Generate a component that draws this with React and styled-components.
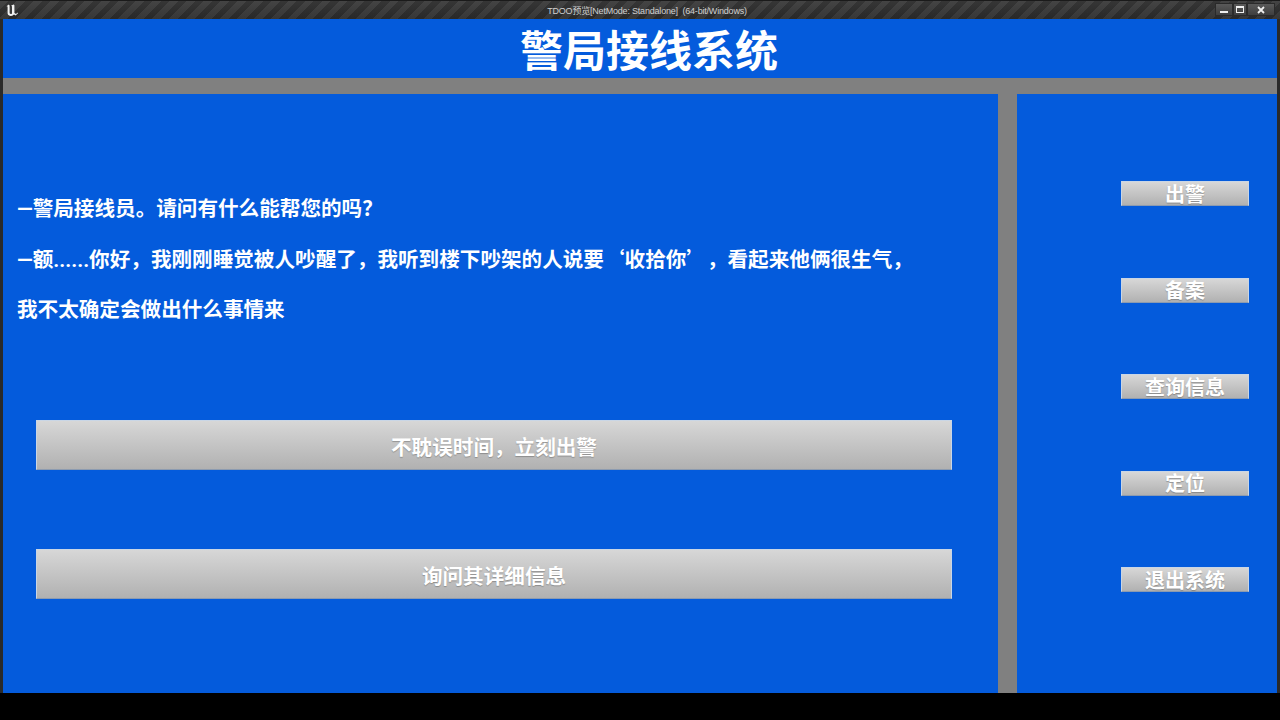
import styled, { createGlobalStyle } from "styled-components";

const GlobalStyle = createGlobalStyle`
  html, body {
    margin: 0;
    padding: 0;
    background: #000;
  }
  #root {
    width: 1280px;
    height: 720px;
    overflow: hidden;
  }
`;

const FONT = `Roboto, "Noto Sans CJK SC", sans-serif`;
const BLUE = "#045bdc";
const GRAY = "#808080";

// 대사 / 선택지 / 메뉴
const choices = ["不耽误时间，立刻出警", "询问其详细信息"];
const menu = ["出警", "备案", "查询信息", "定位", "退出系统"];

const UeLogo = () => (
  <svg width="14" height="14" viewBox="0 0 14 14">
    <path
      d="M1.5 3.2 L3.8 1.6 L4.6 2.4 L4.6 10.2 Q5.6 11.6 7 10.4 L7 3.4 L6.2 2.6 L8.6 1.4 L9.4 2.2 L9.4 10 L11 11 L12.6 9.6 L13 10.2 L10.6 12.6 L9 11.4 Q6.4 13.6 4.2 12.6 Q2.8 12 2.6 10.6 L2.6 3.6 Z"
      fill="#f2f2f2"
    />
  </svg>
);

const App = () => {
  return (
    <Window>
      <GlobalStyle />
      <TitleBar>
        <LogoBox><UeLogo /></LogoBox>
        <TitleText>TDOO预览[NetMode: Standalone]&nbsp;&nbsp;(64-bit/Windows)</TitleText>
        <WinButtons>
          <WinBtn $w={18}>
            <svg width="8" height="8" viewBox="0 0 8 8"><rect x="0" y="5" width="8" height="2" fill="#eee" /></svg>
          </WinBtn>
          <WinBtn $w={14}>
            <svg width="8" height="8" viewBox="0 0 8 8"><rect x="0.5" y="0.5" width="7" height="6" fill="none" stroke="#eee" /><rect x="0" y="0" width="8" height="2" fill="#eee" /></svg>
          </WinBtn>
          <WinBtn $w={28}>
            <svg width="8" height="8" viewBox="0 0 8 8"><path d="M1 1 L7 7 M7 1 L1 7" stroke="#eee" strokeWidth="1.8" /></svg>
          </WinBtn>
        </WinButtons>
      </TitleBar>
      <Frame>
        <Header>
          <Heading>警局接线系统</Heading>
        </Header>
        <Divider />
        <Body>
          <LeftPanel>
            <Dialog>
              <Line>—警局接线员。请问有什么能帮您的吗？</Line>
              <Line>
                —额......你好，我刚刚睡觉被人吵醒了，我听到楼下吵架的人说要<Quote $side="open">‘</Quote>收拾你<Quote $side="close">’</Quote>，看起来他俩很生气，
              </Line>
              <Line>我不太确定会做出什么事情来</Line>
            </Dialog>
            <Choices>
              {choices.map((c) => (
                <ChoiceButton key={c}>{c}</ChoiceButton>
              ))}
            </Choices>
          </LeftPanel>
          <Separator />
          <RightPanel>
            {menu.map((m) => (
              <MenuButton key={m}>{m}</MenuButton>
            ))}
          </RightPanel>
        </Body>
      </Frame>
      <BottomBar />
    </Window>
  );
};

export default App;

const Window = styled.div`
  width: 1280px;
  height: 720px;
  display: flex;
  flex-direction: column;
  background: #000;
  font-family: ${FONT};
`;

const TitleBar = styled.div`
  height: 19px;
  flex-shrink: 0;
  position: relative;
  display: flex;
  align-items: center;
  background:
    repeating-linear-gradient(135deg, rgba(255,255,255,0.05) 0 6px, rgba(0,0,0,0.08) 6px 12px),
    linear-gradient(#3a3a3a, #2c2c2c);
  border-top: 1px solid #1a1a1a;
  box-sizing: border-box;
`;

const LogoBox = styled.div`
  width: 20px;
  display: flex;
  justify-content: center;
  padding-left: 2px;
`;

const TitleText = styled.div`
  position: absolute;
  left: 0;
  right: 0;
  top: 3px;
  text-align: center;
  font-family: "Liberation Sans", "Noto Sans CJK SC", sans-serif;
  font-size: 9px;
  color: #d0d0d0;
  padding-left: 14px;
  letter-spacing: -0.2px;
`;

const WinButtons = styled.div`
  margin-left: auto;
  margin-right: 5px;
  display: flex;
  height: 13px;
  align-self: flex-start;
  margin-top: 2px;
`;

const WinBtn = styled.div`
  width: ${(p) => p.$w}px;
  height: 13px;
  display: flex;
  align-items: center;
  justify-content: center;
  background: linear-gradient(#5a5a5a, #3e3e3e);
  border: 1px solid #2a2a2a;
  box-sizing: border-box;
`;

const Frame = styled.div`
  height: 674px;
  flex-shrink: 0;
  display: flex;
  flex-direction: column;
  background: ${BLUE};
  border-left: 3px solid #2a2a2a;
  border-right: 3px solid #2a2a2a;
  box-sizing: border-box;
`;

const Header = styled.div`
  height: 59px;
  display: flex;
  align-items: center;
  justify-content: center;
`;

const Heading = styled.h1`
  margin: 0 0 0 18px;
  font-family: "Noto Sans CJK SC", sans-serif;
  font-size: 43px;
  font-weight: 700;
  color: #fff;
  line-height: 1;
`;

const Divider = styled.div`
  height: 16px;
  background: ${GRAY};
`;

const Body = styled.div`
  flex: 1;
  display: flex;
`;

const LeftPanel = styled.div`
  width: 995px;
  display: flex;
  flex-direction: column;
`;

const Dialog = styled.div`
  padding: 90px 0 0 14px;
`;

const Line = styled.div`
  font-size: 20.6px;
  font-weight: 700;
  line-height: 50.5px;
  height: 50.5px;
  color: #fff;
  white-space: nowrap;
`;

// 전각 따옴표: 한 글자 폭을 차지
const Quote = styled.span`
  display: inline-block;
  width: 1em;
  line-height: 1;
  font-family: "Noto Sans CJK SC", sans-serif;
  text-align: ${(p) => (p.$side === "open" ? "right" : "left")};
`;

const Choices = styled.div`
  margin-top: 84px;
  padding-left: 33px;
  display: flex;
  flex-direction: column;
  gap: 79px;
`;

const grayButton = `
  background: linear-gradient(#d7d7d7, #b1b1b1);
  border: 1px solid #c9d6e6;
  border-bottom-color: #8c9bb0;
  box-sizing: border-box;
  color: #fff;
  font-family: "Noto Sans CJK SC", sans-serif;
  font-weight: 700;
  display: flex;
  align-items: center;
  justify-content: center;
  text-shadow: 0 1px 1px rgba(0, 0, 0, 0.25);
`;

const ChoiceButton = styled.div`
  ${grayButton}
  width: 916px;
  height: 50px;
  padding-top: 2px;
  font-size: 20.6px;
`;

const Separator = styled.div`
  width: 19px;
  background: ${GRAY};
`;

const RightPanel = styled.div`
  flex: 1;
  display: flex;
  flex-direction: column;
  padding: 87px 0 0 104px;
  gap: 71.5px;
`;

const MenuButton = styled.div`
  ${grayButton}
  width: 128px;
  height: 25px;
  font-size: 20px;
  line-height: 1;
`;

const BottomBar = styled.div`
  flex: 1;
  background: #000;
`;
